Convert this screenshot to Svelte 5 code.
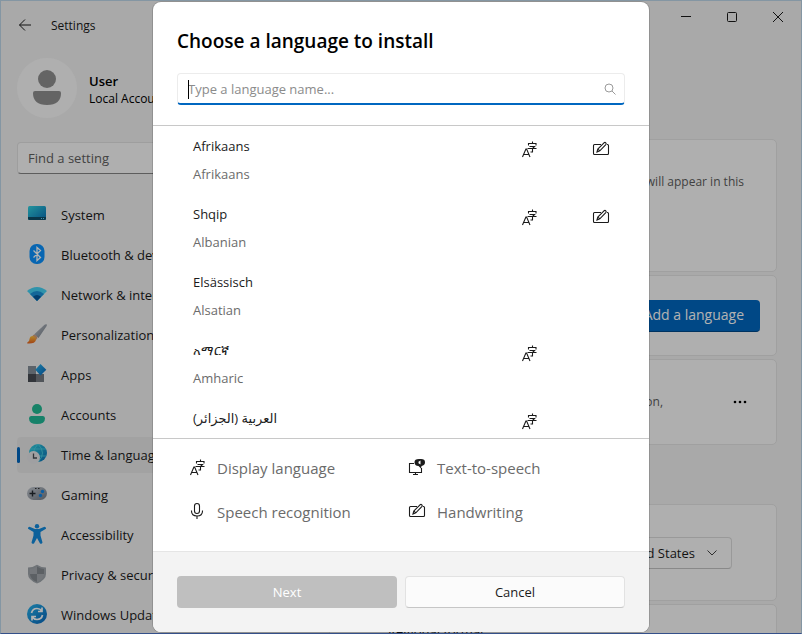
<script>
  const nav = [
    { id: 'system', label: 'System' },
    { id: 'bluetooth', label: 'Bluetooth & devices' },
    { id: 'network', label: 'Network & internet' },
    { id: 'brush', label: 'Personalization' },
    { id: 'apps', label: 'Apps' },
    { id: 'accounts', label: 'Accounts' },
    { id: 'time', label: 'Time & language', active: true },
    { id: 'gaming', label: 'Gaming' },
    { id: 'access', label: 'Accessibility' },
    { id: 'privacy', label: 'Privacy & security' },
    { id: 'update', label: 'Windows Update' }
  ];
  const languages = [
    { name: 'Afrikaans', sub: 'Afrikaans', display: true, pen: true },
    { name: 'Shqip', sub: 'Albanian', display: true, pen: true },
    { name: 'Elsässisch', sub: 'Alsatian' },
    { name: 'አማርኛ', sub: 'Amharic', display: true },
    { name: 'العربية (الجزائر)', sub: 'Arabic (Algeria)', display: true }
  ];
  const legend = [
    { icon: 'display', label: 'Display language' },
    { icon: 'tts', label: 'Text-to-speech' },
    { icon: 'mic', label: 'Speech recognition' },
    { icon: 'pen', label: 'Handwriting' }
  ];
  let query = $state('');
</script>

{#snippet feature(kind)}
  <svg class="feature" viewBox="0 0 18 18" aria-hidden="true">
    {#if kind === 'display'}
      <path d="M2.500 17 5.900 9h.7L10 17M3.700 14.500H8.800" />
      <path d="M12.500 1.500v2M8.500 5.500V3.500h7.500v2M9.500 6.500h5l-2 2v3.500H10.500M7.500 8.500H16.500" />
    {:else if kind === 'pen'}
      <path d="M9 4.500H2.500a1 1 0 0 0-1 1v8a1 1 0 0 0 1 1h13a1 1 0 0 0 1-1v-8q0-1-1-1H15" />
      <path d="m5 12 .8-3L12 2.800q1-.8 1.800 0t0 1.800L7.800 10.900zM5.800 9l2 1.900" />
    {:else if kind === 'mic'}
      <rect x="6.500" y="1.500" width="5" height="10" rx="2.500" />
      <path d="M3.500 8.500v.5q0 5 5.500 5t5.500-5v-.5M9 14v3" />
    {:else}
      <path d="M6 5.500H1.500v9h12V10M7.500 14.500v2M5 16.500h5" />
      <path class="solid" d="M11.500 1H13q4 0 4 3.300T13.500 8L13 10.500 10.500 8q-4-.2-4-3.700T11.500 1z" />
      <path class="hole" d="M12.500 2.500v4l-2-1.200V3.700z" />
    {/if}
  </svg>
{/snippet}

{#snippet navIcon(id)}
  <svg class="nav-icon" viewBox="0 0 20 20" aria-hidden="true">
    {#if id === 'system'}
      <rect x="1" y="2" width="18" height="14" rx="1.500" fill="url(#teal)" />
      <path d="M1 13h18v1.500q0 1.500-1.500 1.500h-15Q1 16 1 14.500z" fill="#0d506b" />
      <path d="M14 14h1v1h-1zM16 14h1v1h-1z" fill="#5fd3ff" />
    {:else if id === 'bluetooth'}
      <rect x="2.500" y="0" width="15" height="20" rx="7" fill="#0c93ff" />
      <path d="m6.500 6.500 7 7-3.500 3V3.500l3.500 3-7 7" fill="none" stroke="#fff" stroke-width="1.300" />
    {:else if id === 'network'}
      <path d="M0 7Q10-1 20 7L10 17z" fill="#45d3f5" />
      <path d="M3 10q7-6 14 0l-7 7z" fill="#1c93da" />
      <path d="M6 12.800q4-3.500 8 0l-4 4.200z" fill="#0559a0" />
    {:else if id === 'brush'}
      <path d="M19.500.300q.8.500 0 2L11.500 14 7 10.500 17.500.800q1-1 2-.5z" fill="url(#steel)" />
      <path d="M6.500 10.800q3 0 4 3.200l-1.500 2-4-3.500z" fill="#d9a079" />
      <path d="M5.500 12q3.500.5 3.500 4-1 4-8.500 3.500-1-.5.5-1.500T2.500 15q.5-3 3-3z" fill="url(#flame)" />
    {:else if id === 'apps'}
      <path d="M1 2h8v8H1z" fill="#858e99" />
      <path d="M1 10h8v8H1z" fill="#484d54" />
      <path d="M9 10h8v8H9z" fill="#757a82" />
      <path d="m13.500 0 5.800 5.800-5.800 5.700-5.200-5.700z" fill="url(#sky)" />
    {:else if id === 'accounts'}
      <circle cx="10" cy="5" r="5" fill="#21bb94" />
      <path d="M4 12h12q2 0 2 2.500 0 5.500-8 5.500t-8-5.500Q2 12 4 12z" fill="#20b997" />
    {:else if id === 'time'}
      <circle cx="11" cy="9" r="9" fill="url(#teal)" />
      <path d="M11 0q-9 9 0 18M11 0q9 9 0 18M3 5h16M3 12h16" fill="none" stroke="#4fd6e6" stroke-width=".8" />
      <circle cx="6.500" cy="13.500" r="6.500" fill="#e5e6e8" />
      <path d="M6.500 9.500v4.500H10" fill="none" stroke="#484d54" stroke-width="1.300" />
    {:else if id === 'gaming'}
      <rect x="0" y="3" width="20" height="13" rx="6.500" fill="url(#steel)" />
      <path d="M5.500 6.500v6M2.500 9.500h6" stroke="#252a30" stroke-width="1.400" />
      <circle cx="15.500" cy="7.500" r="1.700" fill="#1286e8" />
      <circle cx="13.500" cy="11.500" r="1.700" fill="#1286e8" />
      <path d="M8 4h1.500v1H8zM11 4h1.500v1H11z" fill="#333" />
    {:else if id === 'access'}
      <circle cx="10" cy="2.200" r="2.200" fill="#128bdf" />
      <path d="M2.500 2.800 8 5h4l5.500-2.200q1.700 0 1.500 2L13.500 8v3.500l2 7q-.5 2-2.500 1L10 14l-3 5.500q-2 1-2.500-1l2-7V8L1 4.800Q.8 2.800 2.500 2.800z" fill="#128bdf" />
    {:else if id === 'privacy'}
      <path d="M10 .700Q14 3.500 19 3.500V10q0 6-9 9.500Q1 16 1 10V3.500Q6 3.500 10 .700z" fill="#9fa5ab" />
      <path d="M10 2.500q3 2 7 2.500v5H10zM3 10h7v8q-7-3-7-8z" fill="#858a90" />
      <path d="M10 2.500Q7 4.500 3 5v5h7zM17 10h-7v8q7-3 7-8z" fill="#a6abb0" />
    {:else}
      <circle cx="10" cy="10" r="10" fill="url(#sky)" />
      <path d="M4.500 9q1-4.500 5.500-4.500 3 0 4.800 2.500M15 3.500V7.500h-4M15.500 11q-1 4.500-5.500 4.500-3 0-4.800-2.500M5 16.500v-4h4" fill="none" stroke="#fff" stroke-width="1.700" />
    {/if}
  </svg>
{/snippet}

<svg class="defs" aria-hidden="true">
  <defs>
    <linearGradient id="teal" x1="0" y1="0" x2="1" y2="1"><stop stop-color="#33d5e2" /><stop offset="1" stop-color="#0870b8" /></linearGradient>
    <linearGradient id="sky" x1="0" y1="0" x2="1" y2="1"><stop stop-color="#29b6ee" /><stop offset="1" stop-color="#0867bd" /></linearGradient>
    <linearGradient id="steel" x1="0" y1="0" x2="1" y2="1"><stop stop-color="#c3c9d1" /><stop offset="1" stop-color="#747c87" /></linearGradient>
    <linearGradient id="flame" x1="0" y1="0" x2="0" y2="1"><stop stop-color="#ffc23d" /><stop offset="1" stop-color="#e86220" /></linearGradient>
  </defs>
</svg>

<div class="window">
  <header class="titlebar">
    <button class="back" aria-label="Back">
      <svg width="14" height="14" viewBox="0 0 14 14"><path d="M13 7H1.500M7 1.500 1.500 7 7 12.500" /></svg>
    </button>
    <span class="app-name">Settings</span>
    <div class="controls">
      <button aria-label="Minimize"><svg width="10" height="10" viewBox="0 0 10 10"><path d="M0 4.500h10" /></svg></button>
      <button aria-label="Maximize"><svg width="10" height="10" viewBox="0 0 10 10"><rect x=".5" y=".5" width="9" height="9" rx="1" /></svg></button>
      <button aria-label="Close"><svg width="10" height="10" viewBox="0 0 10 10"><path d="m0 0 10 10M10 0 0 10" /></svg></button>
    </div>
  </header>

  <div class="body">
    <aside>
      <div class="profile">
        <svg width="60" height="60" viewBox="0 0 60 60" aria-hidden="true">
          <circle cx="30" cy="30" r="30" fill="#fbfbfb" />
          <circle cx="30" cy="21" r="9" fill="#909090" />
          <path d="M18 33h24q2 0 2 2 0 12-14 12T16 35q0-2 2-2z" fill="#909090" />
        </svg>
        <div class="who">
          <strong>User</strong>
          <span>Local Account</span>
        </div>
      </div>
      <input class="find" type="search" placeholder="Find a setting" aria-label="Find a setting" />
      <nav>
        {#each nav as item (item.id)}
          <a href="#{item.id}" class:active={item.active}>
            {@render navIcon(item.id)}
            <span>{item.label}</span>
          </a>
        {/each}
      </nav>
    </aside>

    <main>
      <section class="card display">
        <p>Windows features will appear in this</p>
      </section>
      <section class="card add">
        <button class="primary">Add a language</button>
      </section>
      <section class="card pack">
        <p>Text-to-speech, speech recognition,</p>
        <button class="more" aria-label="More options">
          <svg width="14" height="4" viewBox="0 0 14 4"><circle cx="2" cy="2" r="1.300" /><circle cx="7" cy="2" r="1.300" /><circle cx="12" cy="2" r="1.300" /></svg>
        </button>
      </section>
      <section class="card region">
        <div class="select">
          <select aria-label="Country or region"><option>United States</option></select>
          <svg width="10" height="6" viewBox="0 0 10 6" aria-hidden="true"><path d="m.5.5 4.500 4.500L9.500.5" /></svg>
        </div>
      </section>
      <section class="card format">Regional format</section>
    </main>
  </div>

  <div class="overlay">
    <div class="dialog" role="dialog" aria-modal="true" aria-labelledby="title">
      <div class="head">
        <h1 id="title">Choose a language to install</h1>
        <div class="search">
          <input type="text" bind:value={query} placeholder="Type a language name..." aria-label="Type a language name" />
          <i class="caret"></i>
          <svg width="12" height="12" viewBox="0 0 12 12" aria-hidden="true"><circle cx="5" cy="5" r="4" /><path d="m8 8 3.500 3.500" /></svg>
        </div>
      </div>
      <ul class="list">
        {#each languages as lang (lang.name)}
          <li>
            <button class="row">
              <span class="names"><span class="name"><bdi>{lang.name}</bdi></span><span class="sub">{lang.sub}</span></span>
              <span class="cell">{#if lang.display}{@render feature('display')}{/if}</span>
              <span class="cell">{#if lang.pen}{@render feature('pen')}{/if}</span>
            </button>
          </li>
        {/each}
      </ul>
      <ul class="legend">
        {#each legend as entry (entry.icon)}
          <li>{@render feature(entry.icon)}<span>{entry.label}</span></li>
        {/each}
      </ul>
      <footer>
        <button class="next" disabled>Next</button>
        <button class="cancel">Cancel</button>
      </footer>
    </div>
  </div>
</div>

<style>
  :global(body) { margin: 0; overflow: hidden; }
  * { box-sizing: border-box; }
  button, input, select { font: inherit; color: inherit; margin: 0; }
  button { border: 0; padding: 0; background: none; }
  ul { list-style: none; margin: 0; padding: 0; }
  svg { flex: none; }
  p { margin: 0; }
  .defs { position: absolute; width: 0; height: 0; }

  .window {
    position: relative;
    display: flex;
    flex-direction: column;
    height: 100vh;
    overflow: hidden;
    background: #f3f3f3;
    border: 1px solid #8496a3;
    border-bottom-color: #34508a;
    color: #1b1b1b;
    font: 13px/20px "Open Sans", "Noto Sans", "DejaVu Sans", sans-serif;
  }
  .titlebar { display: flex; align-items: flex-start; flex: none; height: 57px; }
  .titlebar svg { fill: none; stroke: #1b1b1b; }
  .back { display: flex; margin: 17px 19px 0 17px; }
  .app-name { margin-top: 15px; font-size: 12px; }
  .controls { display: flex; margin-left: auto; }
  .controls button { display: grid; place-items: center; width: 46px; height: 32px; }

  .body { display: flex; flex: 1; min-height: 0; }
  aside { flex: none; width: 312px; padding-left: 16px; }
  .profile { display: flex; align-items: center; gap: 12px; }
  .who { padding-top: 4px; }
  .profile strong, .profile span { display: block; line-height: 18px; }
  .profile strong { font-weight: 600; color: #000; }
  .profile span { font-size: 12px; color: #000; }
  .find {
    display: block;
    width: 100%;
    height: 32px;
    margin: 24px 0 23px;
    padding: 0 10px;
    background: #fbfbfb;
    border: 1px solid #e2e2e2;
    border-bottom-color: #868686;
    border-radius: 4px;
  }
  .find::placeholder { color: #606060; opacity: 1; }
  nav { display: flex; flex-direction: column; gap: 4px; }
  nav a {
    position: relative;
    display: flex;
    align-items: center;
    gap: 14px;
    flex: none;
    height: 36px;
    padding: 0 10px;
    border-radius: 4px;
    color: inherit;
    text-decoration: none;
    white-space: nowrap;
  }
  nav a.active { background: #e9e9e9; }
  nav a.active::before {
    content: "";
    position: absolute;
    left: 0;
    width: 3px;
    height: 16px;
    border-radius: 2px;
    background: #0067c0;
  }
  .nav-icon { width: 20px; height: 20px; margin-bottom: 2px; }

  main { display: flex; flex-direction: column; flex: 1; gap: 3px; padding: 81px 24px 0 16px; }
  .card {
    display: flex;
    align-items: center;
    justify-content: flex-end;
    flex: none;
    background: #fbfbfb;
    border: 1px solid #e5e5e5;
    border-radius: 5px;
  }
  .card p { font-size: 12px; color: #5d5d5d; white-space: nowrap; }
  .display { height: 133px; padding: 32px; align-items: flex-start; }
  .add { height: 81px; padding-right: 16px; }
  .primary { height: 32px; padding: 0 16px; border-radius: 4px; background: #0067c0; border-bottom: 1px solid #00498a; color: #fff; font-size: 14px; }
  .pack { height: 86px; padding-right: 29px; gap: 70px; }
  .more { display: flex; }
  .region { height: 97px; margin-top: 56px; padding-right: 44px; }
  .select { display: flex; align-items: center; width: 160px; height: 32px; padding: 0 14px; border: 1px solid #dcdcdc; border-bottom-color: #c4c4c4; border-radius: 4px; }
  .select select { flex: 1; padding: 0; appearance: none; border: 0; background: none; text-align: right; text-align-last: right; margin-right: 12px; }
  .select svg { fill: none; stroke: #444; }
  .format { height: 80px; padding: 16px 58px; align-items: flex-start; justify-content: flex-start; }

  .overlay {
    position: absolute;
    inset: 0;
    display: flex;
    justify-content: center;
    padding: 1px 0;
    background: rgba(0, 0, 0, 0.3);
  }
  .dialog {
    display: flex;
    flex-direction: column;
    width: 496px;
    max-width: 100%;
    overflow: hidden;
    background: #fff;
    border-radius: 8px;
    box-shadow: 0 0 0 1px rgba(0, 0, 0, 0.14);
  }
  .head { flex: none; padding: 25px 24px 20px; border-bottom: 1px solid #c8c8c8; }
  h1 { margin: 0 0 18px; font-size: 19px; line-height: 28px; font-weight: 600; color: #000; }
  .search { position: relative; display: flex; align-items: center; }
  .search input {
    width: 100%;
    height: 32px;
    padding: 0 34px 0 10px;
    border: 1px solid #ececec;
    border-bottom: 2px solid #0067c0;
    border-radius: 4px;
    background: #fff;
    outline: 0;
  }
  .search input::placeholder { color: #8b8b8b; opacity: 1; }
  .search svg { position: absolute; right: 9px; fill: none; stroke: #9a9a9a; }
  .caret { position: absolute; left: 11px; width: 1px; height: 19px; background: #000; }

  .list { flex: 1; min-height: 0; overflow: hidden; }
  .row { display: flex; width: 100%; height: 68px; padding: 10px 12px 0 40px; text-align: left; }
  .names { flex: 1; display: flex; flex-direction: column; gap: 8px; }
  .name, .sub { height: 20px; }
  .sub, .legend { color: #6b6b6b; }
  .cell { display: flex; justify-content: center; width: 72px; padding-top: 4px; }
  .feature { width: 18px; height: 18px; fill: none; stroke: #1b1b1b; stroke-width: 1.1; }
  .solid { fill: #1b1b1b; stroke: none; }
  .hole { fill: #fff; stroke: none; }

  .legend {
    display: grid;
    grid-template-columns: 1fr 1fr;
    grid-auto-rows: 44px;
    flex: none;
    height: 113px;
    padding: 7px 21px 0 35px;
    border-top: 1px solid #c8c8c8;
    font-size: 15px;
  }
  .legend li { display: flex; align-items: center; gap: 11px; }
  .legend .feature { margin-bottom: 3px; }
  footer { display: grid; grid-template-columns: 1fr 1fr; gap: 8px; flex: none; padding: 24px; background: #f3f3f3; border-top: 1px solid #e5e5e5; }
  footer button { height: 32px; border-radius: 4px; }
  .next { background: #bfbfbf; color: #fff; }
  .cancel { background: #fbfbfb; border: 1px solid #e2e2e2; border-bottom-color: #c6c6c6; }
</style>
